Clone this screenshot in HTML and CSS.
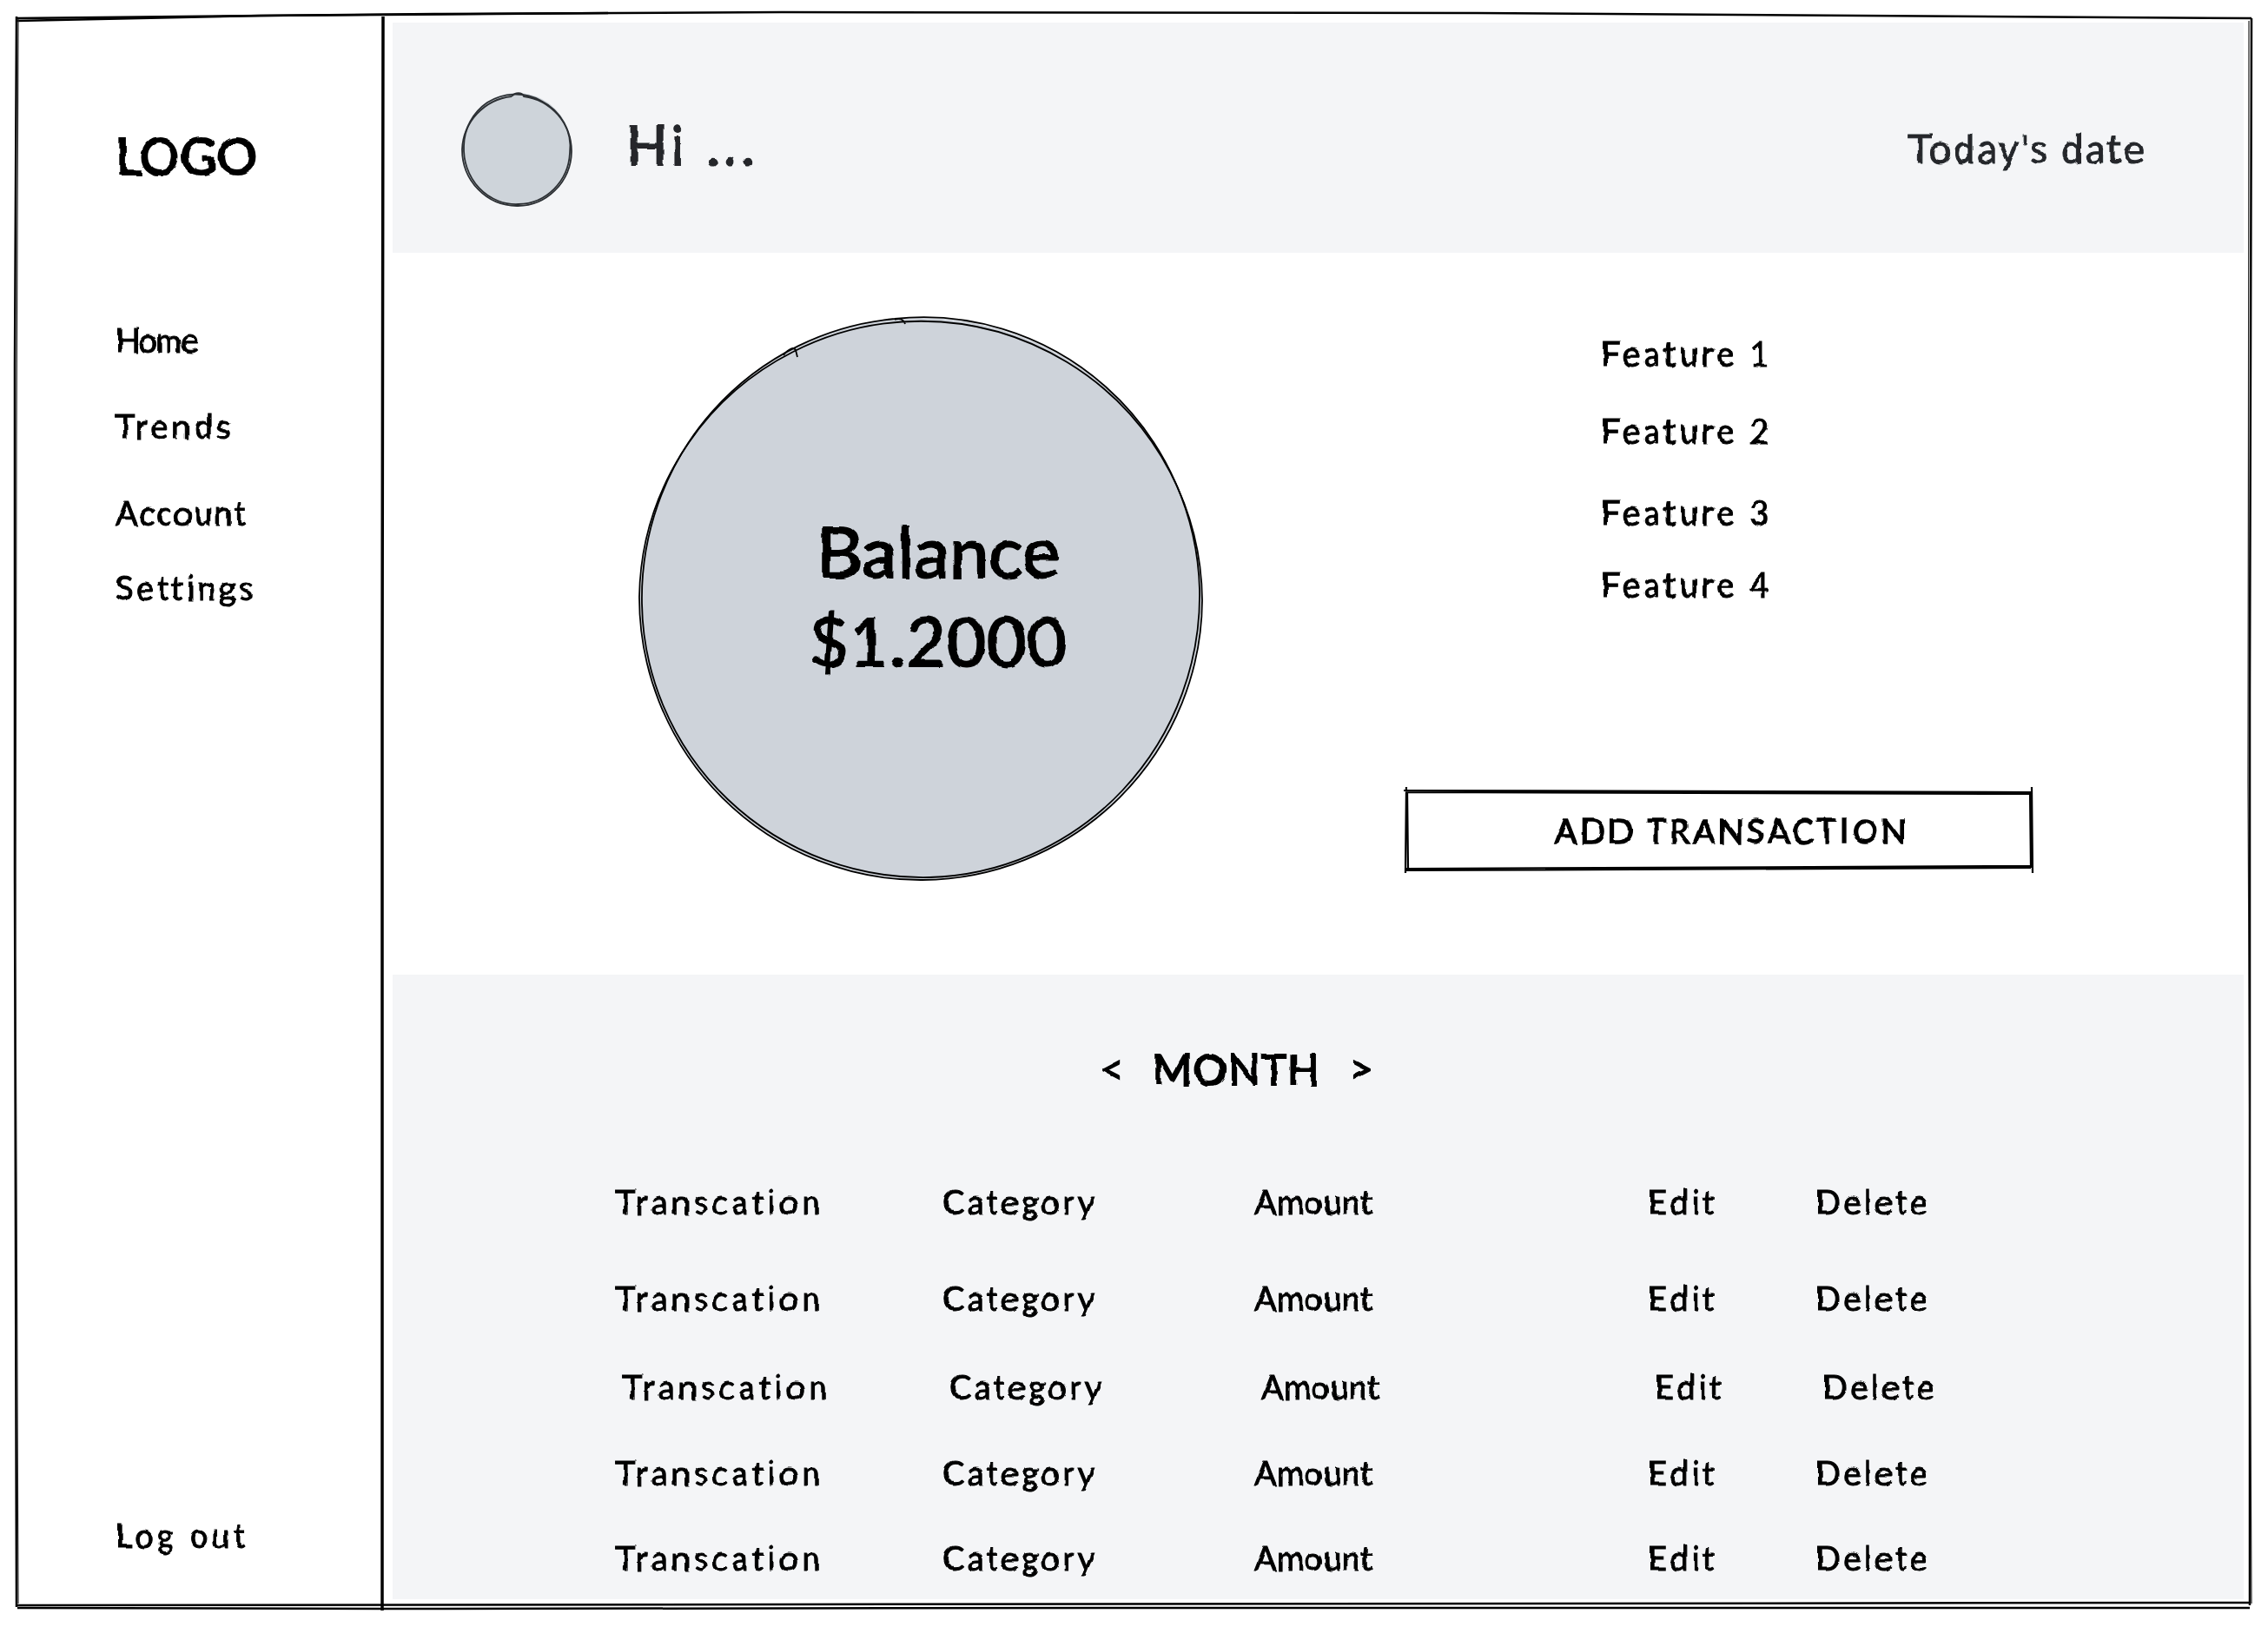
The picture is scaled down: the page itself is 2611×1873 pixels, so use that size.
FILE: index.html
```html
<!DOCTYPE html>
<html lang="en">
<head>
<meta charset="utf-8">
<title>Wireframe</title>
<link rel="stylesheet" href="styles.css">
</head>
<body>
<svg class="defs" width="0" height="0" aria-hidden="true">
  <filter id="rough" x="-5%" y="-15%" width="110%" height="130%">
    <feTurbulence type="fractalNoise" baseFrequency="0.05" numOctaves="2" seed="4"/>
    <feDisplacementMap in="SourceGraphic" scale="5" xChannelSelector="R" yChannelSelector="G"/>
  </filter>
</svg>
<div class="app">
  <aside class="sidebar">
    <div class="logo">LOGO</div>
    <nav class="nav">
      <a class="nav-item">Home</a>
      <a class="nav-item">Trends</a>
      <a class="nav-item">Account</a>
      <a class="nav-item">Settings</a>
    </nav>
    <a class="logout">Log out</a>
  </aside>
  <main class="main">
    <header class="header">
      <div class="avatar">
        <svg class="sketch" viewBox="0 0 128 130">
          <ellipse class="avatar-fill" cx="64" cy="65" rx="63" ry="64"/>
          <path class="avatar-line" d="M58 5C62 0 70 0 72 5A63 64 0 0 1 127 68A62 64 0 0 1 64 131A63 65 0 0 1 1 66A64 64 0 0 1 58 5"/>
          <path class="avatar-line" d="M30 12A62 63 0 0 1 92 10A63 60 0 0 1 125 70A60 62 0 0 1 66 129A60 64 0 0 1 3 62A62 62 0 0 1 30 12"/>
        </svg>
      </div>
      <div class="greeting">Hi ...</div>
      <div class="date">Today's date</div>
    </header>
    <section class="hero">
      <div class="balance">
        <svg class="sketch" viewBox="6 6 648 648">
          <circle class="balance-fill" cx="330" cy="330" r="323"/>
          <path class="balance-line" d="M172 50C178 42 184 40 186 44L188 52M300 9C306 7 310 8 312 14M183 46A324 324 0 0 1 654 332A325 324 0 0 1 332 654A324 325 0 0 1 6 328A324 322 0 0 1 183 46"/>
          <path class="balance-line" d="M300 8A318 322 0 0 1 651 320A320 325 0 0 1 340 651A324 320 0 0 1 9 336A320 323 0 0 1 300 8"/>
        </svg>
        <div class="balance-text">
          <div class="balance-label">Balance</div>
          <div class="balance-amount">$1.2000</div>
        </div>
      </div>
      <div class="actions">
        <ul class="features">
          <li class="feature">Feature 1</li>
          <li class="feature">Feature 2</li>
          <li class="feature">Feature 3</li>
          <li class="feature">Feature 4</li>
        </ul>
        <button class="add-btn">
          <svg class="sketch" viewBox="0 0 722 94">
            <path class="btn-line" d="M-2 1L722 3M0 3L720 5M1 -3L0 96M2 0L3 90M721 -3L722 96M719 2L720 90M0 91L721 88M1 93L720 90"/>
          </svg>
          <span class="add-label">ADD TRANSACTION</span>
        </button>
      </div>
    </section>
    <section class="ledger">
      <div class="month">
        <span class="month-arrow">&lt;</span>
        <span class="month-name">MONTH</span>
        <span class="month-arrow">&gt;</span>
      </div>
      <div class="rows">
        <div class="row"><span class="cell cell-name">Transcation</span><span class="cell cell-cat">Category</span><span class="cell cell-amt">Amount</span><span class="cell cell-edit">Edit</span><span class="cell cell-del">Delete</span></div>
        <div class="row"><span class="cell cell-name">Transcation</span><span class="cell cell-cat">Category</span><span class="cell cell-amt">Amount</span><span class="cell cell-edit">Edit</span><span class="cell cell-del">Delete</span></div>
        <div class="row"><span class="cell cell-name">Transcation</span><span class="cell cell-cat">Category</span><span class="cell cell-amt">Amount</span><span class="cell cell-edit">Edit</span><span class="cell cell-del">Delete</span></div>
        <div class="row"><span class="cell cell-name">Transcation</span><span class="cell cell-cat">Category</span><span class="cell cell-amt">Amount</span><span class="cell cell-edit">Edit</span><span class="cell cell-del">Delete</span></div>
        <div class="row"><span class="cell cell-name">Transcation</span><span class="cell cell-cat">Category</span><span class="cell cell-amt">Amount</span><span class="cell cell-edit">Edit</span><span class="cell cell-del">Delete</span></div>
      </div>
    </section>
  </main>
  <svg class="frame" viewBox="0 0 2611 1873" aria-hidden="true">
    <path class="frame-line" d="M19 21L500 16L900 14L1700 15L2592 21"/>
    <path class="frame-line" d="M19 24L300 18L700 15"/>
    <path class="frame-line" d="M19 19L17 420L17 1000L19 1850"/>
    <path class="frame-thin" d="M21 22L19 500L18 1100L21 1846"/>
    <path class="frame-line" d="M2592 21L2590 800L2590 1848"/>
    <path class="frame-thin" d="M2589 24L2588 900L2592 1846"/>
    <path class="frame-line" d="M19 1848L900 1847L2590 1845"/>
    <path class="frame-line" d="M20 1851L440 1852L1300 1851L2590 1851"/>
    <path class="frame-side" d="M441 19L440 800L440 1854"/>
  </svg>
</div>
</body>
</html>
```
FILE: styles.css
```css
* { box-sizing: border-box; }
html, body { margin: 0; padding: 0; background: #fff; }
body { font-family: "Lato", "Noto Sans", sans-serif; color: #000; }
.defs { position: absolute; }

.logo, .nav-item, .logout, .greeting, .date, .balance-label, .balance-amount,
.feature, .add-label, .month-arrow, .month-name, .cell {
  filter: url(#rough);
  -webkit-text-stroke: 1px currentColor;
}

.app { position: relative; display: flex; width: 2611px; height: 1873px; overflow: hidden; }
.frame { position: absolute; inset: 0; width: 2611px; height: 1873px; pointer-events: none; fill: none; }
.frame-line { stroke: #000; stroke-width: 2.5; fill: none; }
.frame-thin { stroke: #222; stroke-width: 1.2; fill: none; }
.frame-side { stroke: #000; stroke-width: 3.5; fill: none; }

.sidebar { display: flex; flex-direction: column; width: 440px; padding: 149px 0 84px 133px; flex: none; }
.logo { font-size: 58px; line-height: 60px; letter-spacing: 0; -webkit-text-stroke-width: 2px; }
.nav { display: flex; flex-direction: column; margin-top: 160px; }
.nav-item { display: block; font-size: 38px; line-height: 44px; letter-spacing: 2px; }
.nav-item:nth-child(1) { letter-spacing: -2px; }
.nav-item:nth-child(2) { margin-top: 55px; letter-spacing: 4.5px; }
.nav-item:nth-child(3) { margin-top: 56px; }
.nav-item:nth-child(4) { margin-top: 42px; letter-spacing: 3.5px; }
.logout { margin-top: auto; font-size: 38px; line-height: 44px; letter-spacing: 4px; }

.main { display: flex; flex-direction: column; flex: 1; padding: 26px 28px 32px 12px; }

.header { display: flex; align-items: center; height: 265px; flex: none; padding: 25px 113px 0 79px; background: #f4f5f7; }
.avatar { position: relative; width: 128px; height: 130px; flex: none; }
.sketch { position: absolute; inset: 0; width: 100%; height: 100%; overflow: visible; }
.avatar-fill { fill: #ced4da; }
.avatar-line { fill: none; stroke: #2b2f33; stroke-width: 1.8; }
.greeting { margin: -10px 0 0 62px; font-size: 62px; line-height: 70px; color: #25282c; letter-spacing: 5px; -webkit-text-stroke-width: 2px; }
.date { margin-left: auto; font-size: 46px; line-height: 50px; color: #25282c; letter-spacing: 2px; }

.hero { display: flex; align-items: flex-start; height: 831px; flex: none; padding: 74px 0 0 284px; }
.balance { position: relative; display: flex; align-items: center; justify-content: center; width: 648px; height: 648px; flex: none; }
.balance-fill { fill: #ced3da; }
.balance-line { fill: none; stroke: #000; stroke-width: 1.8; }
.balance-text { position: relative; text-align: center; margin-left: 40px; margin-top: -8px; }
.balance-label { font-size: 82px; line-height: 104px; -webkit-text-stroke-width: 2px; }
.balance-amount { font-size: 78px; line-height: 104px; letter-spacing: 1px; -webkit-text-stroke-width: 2px; }

.actions { display: flex; flex-direction: column; width: 722px; margin-left: 234px; }
.features { list-style: none; margin: 20px 0 0; padding: 0 0 0 225px; }
.feature { font-size: 40px; line-height: 44px; letter-spacing: 3.5px; }
.feature:nth-child(2) { margin-top: 45px; }
.feature:nth-child(3) { margin-top: 50px; }
.feature:nth-child(4) { margin-top: 39px; }
.add-btn { position: relative; display: flex; align-items: center; justify-content: center; width: 722px; height: 94px; margin-top: 214px; padding: 0; border: 0; background: #fff; font: inherit; color: #000; }
.btn-line { fill: none; stroke: #000; stroke-width: 2.2; }
.add-label { position: relative; margin-left: 30px; font-size: 38px; line-height: 44px; letter-spacing: 3.5px; -webkit-text-stroke-width: 1.5px; }

.ledger { flex: 1; padding: 80px 0 0 255px; background: #f4f5f7; }
.month { display: flex; align-items: center; gap: 33px; margin-left: 559px; }
.month-arrow { font-size: 48px; line-height: 56px; -webkit-text-stroke-width: 1.5px; }
.month-name { font-size: 49px; line-height: 56px; letter-spacing: 1px; -webkit-text-stroke-width: 2px; }
.rows { margin-top: 103px; }
.row { display: grid; grid-template-columns: 378px 359px 453px 193px auto; font-size: 38px; line-height: 44px; }
.cell-name { padding-left: 2px; letter-spacing: 4.5px; }
.cell-cat { letter-spacing: 3.3px; }
.cell-amt { letter-spacing: 0.3px; }
.cell-edit { letter-spacing: 4px; }
.cell-del { letter-spacing: 3.6px; }
.row:nth-child(2) { margin-top: 67px; }
.row:nth-child(3) { margin-top: 58px; margin-left: 8px; }
.row:nth-child(4) { margin-top: 55px; }
.row:nth-child(5) { margin-top: 54px; }
```
